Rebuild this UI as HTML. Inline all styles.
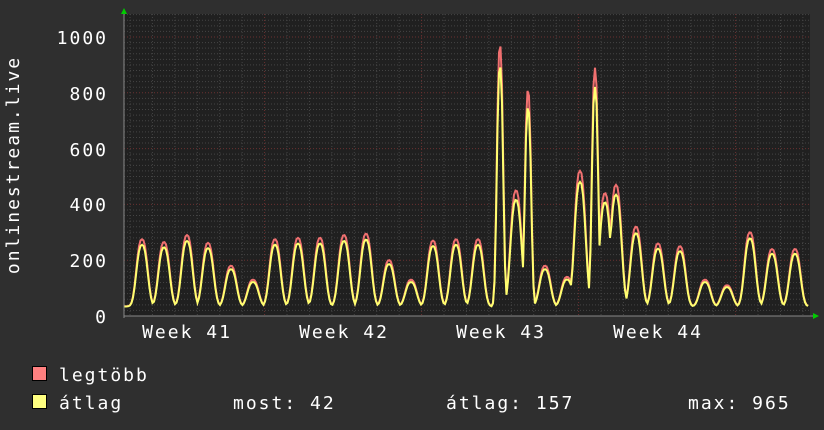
<!DOCTYPE html>
<html><head><meta charset="utf-8"><style>
body{margin:0;background:#2f2f2f;width:824px;height:430px;overflow:hidden}
svg{display:block}
text{font-family:"DejaVu Sans Mono","Liberation Mono",monospace;font-size:18px;fill:#fff;letter-spacing:2px}
</style></head><body>
<svg id="s" width="824" height="430" xmlns="http://www.w3.org/2000/svg">
<rect width="824" height="430" fill="#2f2f2f"/>
<rect x="124" y="14" width="686" height="302" fill="#202020"/>
<g id="grid"></g>
<polyline id="mx" fill="none" stroke="#f07070" stroke-width="2"/>
<polyline id="av" fill="none" stroke="#ffff70" stroke-width="2"/>
<line x1="124" y1="316" x2="815" y2="316" stroke="#888" stroke-width="1"/>
<line x1="124" y1="10" x2="124" y2="318" stroke="#888" stroke-width="1"/>
<polygon points="121,14 127,14 124,8" fill="#0c0"/>
<polygon points="813,313 813,319 819,316" fill="#0c0"/>
<text x="108" y="44" text-anchor="end">1000</text>
<text x="108" y="100" text-anchor="end">800</text>
<text x="108" y="156" text-anchor="end">600</text>
<text x="108" y="211" text-anchor="end">400</text>
<text x="108" y="267" text-anchor="end">200</text>
<text x="108" y="323" text-anchor="end">0</text>
<text transform="translate(19,165) rotate(-90)" text-anchor="middle">onlinestream.live</text>
<text x="187" y="338" text-anchor="middle">Week 41</text>
<text x="344" y="338" text-anchor="middle">Week 42</text>
<text x="501" y="338" text-anchor="middle">Week 43</text>
<text x="658" y="338" text-anchor="middle">Week 44</text>
<rect x="32.5" y="366.5" width="14" height="14" fill="#ff8080" stroke="#000"/>
<rect x="32.5" y="394.5" width="14" height="14" fill="#ffff80" stroke="#000"/>
<text x="59" y="381">legtöbb</text>
<text x="59" y="409">átlag</text>
<text x="233" y="409">most: 42</text>
<text x="446" y="409">átlag: 157</text>
<text x="688" y="409">max: 965</text>
</svg>
<script>
var g=document.getElementById('grid'),h='';
function Y(v){return 316-v*0.279}
for(var v=20;v<=1080;v+=20){var y=Y(v);var red=(v%200==0);h+='<line x1="124" x2="810" y1="'+y+'" y2="'+y+'" stroke="'+(red?'#6a3030':'#444')+'" stroke-dasharray="1,2"/>';}
for(var x=130;x<810;x+=22.43){var m=((x-264)%157+157)%157;var red=m<3||m>154;h+='<line y1="14" y2="316" x1="'+x+'" x2="'+x+'" stroke="'+(red?'#6a3030':'#444')+'" stroke-dasharray="1,2"/>';}
g.innerHTML=h;
var pk=[[142,275],[164,265],[187,290],[208,262],[231,180],[253,130],[275,275],[298,280],[320,280],[344,290],[366,295],[389,200],[411,130],[433,270],[456,275],[478,275],[500,970],[516,450],[528,810],[545,180],[567,140],[580,520],[595,890],[605,440],[616,470],[636,320],[658,260],[680,250],[705,130],[727,110],[750,300],[772,240],[795,240]];
function f(x){var v=35;for(var i=0;i<pk.length;i++){var w=pk[i][1]>600?4:7;var d=(x-pk[i][0])/w;var t=35+(pk[i][1]-35)*Math.exp(-Math.pow(Math.abs(d),2.6));if(t>v)v=t;}return v}
var a='',b='';for(var x=124;x<=808;x+=1.5){var v=f(x);a+=x+','+Y(v)+' ';b+=x+','+Y(v*0.92+2)+' ';}
document.getElementById('mx').setAttribute('points',a);
document.getElementById('av').setAttribute('points',b);
</script>
</body></html>
